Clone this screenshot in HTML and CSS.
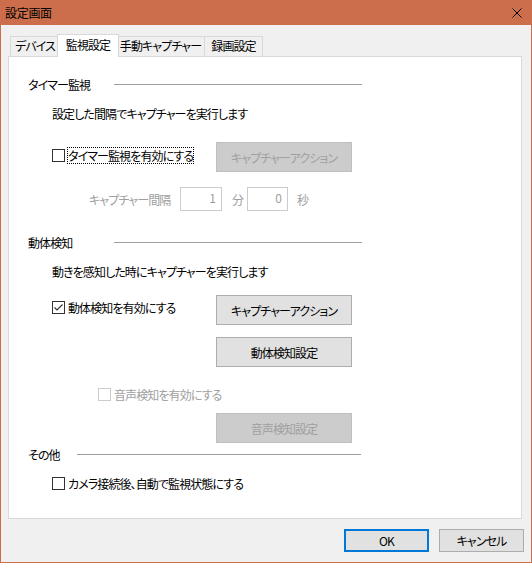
FILE: index.html
```html
<!DOCTYPE html>
<html lang="ja">
<head>
<meta charset="utf-8">
<title>設定画面</title>
<link rel="stylesheet" href="styles.css">
</head>
<body>
<div class="window">
  <div class="titlebar">
    <span class="title">設定画面</span>
    <svg class="close" width="10" height="10" viewBox="0 0 10 10"><path d="M0.5 0.5 L9.5 9.5 M9.5 0.5 L0.5 9.5" stroke="#000" stroke-width="1" fill="none"/></svg>
  </div>
  <div class="client">
    <div class="tabs">
      <div class="tab t1">デバイス</div>
      <div class="tab sel">監視設定</div>
      <div class="tab t3">手動キャプチャー</div>
      <div class="tab t4">録画設定</div>
    </div>
    <div class="panel">
      <div class="ghead g1"><span>タイマー監視</span><span class="rule"></span></div>
      <div class="desc r-desc1">設定した間隔でキャプチャーを実行します</div>
      <div class="row r-timer">
        <label class="chk"><span class="box"></span><span class="lbl focus">タイマー監視を有効にする</span></label>
        <button class="btn disabled">キャプチャーアクション</button>
      </div>
      <div class="row r-interval">
        <span class="ilabel">キャプチャー間隔</span>
        <span class="field f1">1</span>
        <span class="unit u1">分</span>
        <span class="field f2">0</span>
        <span class="unit u2">秒</span>
      </div>
      <div class="ghead g2"><span>動体検知</span><span class="rule"></span></div>
      <div class="desc r-desc2">動きを感知した時にキャプチャーを実行します</div>
      <div class="row r-motion">
        <label class="chk"><span class="box"><svg width="11" height="11" viewBox="0 0 11 11"><path d="M1.5 5.5 L4 8 L9.5 2.5" stroke="#333" stroke-width="1.2" fill="none"/></svg></span><span class="lbl">動体検知を有効にする</span></label>
        <button class="btn">キャプチャーアクション</button>
      </div>
      <div class="row r-motionset">
        <button class="btn">動体検知設定</button>
      </div>
      <div class="row r-audio">
        <label class="chk dis"><span class="box"></span><span class="lbl">音声検知を有効にする</span></label>
      </div>
      <div class="row r-audioset">
        <button class="btn disabled">音声検知設定</button>
      </div>
      <div class="ghead g3"><span>その他</span><span class="rule"></span></div>
      <div class="row r-auto">
        <label class="chk"><span class="box"></span><span class="lbl">カメラ接続後、自動で監視状態にする</span></label>
      </div>
    </div>
    <div class="footer">
      <button class="btn fbtn ok">OK</button>
      <button class="btn fbtn">キャンセル</button>
    </div>
  </div>
</div>
</body>
</html>
```
FILE: styles.css
```css
* { box-sizing: border-box; }
html, body { margin: 0; padding: 0; background: #fff; }
body {
  font-family: "Noto Sans CJK JP", "Noto Sans", sans-serif;
  font-size: 12px;
  font-feature-settings: "palt";
  letter-spacing: -0.9px;
  color: #000;
}
.window {
  width: 532px;
  height: 563px;
  border: 1px solid #cc6d4c;
  background: #f0f0f0;
  display: flex;
  flex-direction: column;
}
.titlebar {
  height: 24px;
  background: #cc6d4c;
  display: flex;
  align-items: center;
  justify-content: space-between;
  padding: 0 9px 0 4px;
  flex: none;
}
.title { font-size: 12px; line-height: 16px; letter-spacing: -0.3px; }
.close { display: block; margin-top: -1px; }
.client { flex: 1; display: flex; flex-direction: column; }
.tabs {
  display: flex;
  align-items: flex-start;
  margin: 11px 0 0 9px;
  height: 20px;
}
.tab {
  height: 20px;
  border: 1px solid #d9d9d9;
  border-bottom: none;
  background: #f0f0f0;
  text-align: center;
  line-height: 18px;
  white-space: nowrap;
}
.t1 { width: 49px; border-right: none; }
.sel {
  position: relative;
  z-index: 1;
  width: 62px;
  height: 23px;
  margin: -2px -2px 0 -2px;
  background: #fff;
  line-height: 19px;
}
.t3 { width: 88px; border-left: none; }
.t4 { width: 58px; border-left: none; }
.panel {
  margin-left: 7px;
  width: 514px;
  height: 463px;
  border: 1px solid #d9d9d9;
  background: #fff;
  flex: none;
}
.ghead {
  display: grid;
  align-items: center;
  height: 20px;
  padding-left: 19px;
}
.g1, .g2 { grid-template-columns: 86px 248px; }
.g3 { grid-template-columns: 49px 284px; }
.g1 { margin-top: 17px; }
.g2 { margin-top: 21px; }
.g3 { margin-top: 1px; }
.rule { height: 1px; background: #a0a0a0; }
.desc { height: 20px; line-height: 20px; padding-left: 43px; }
.r-desc1 { margin-top: 10px; }
.r-desc2 { margin-top: 10px; }
.row { display: flex; align-items: flex-start; padding-left: 43px; }
.chk {
  display: flex;
  align-items: center;
  height: 17px;
}
.box {
  width: 13px;
  height: 13px;
  border: 1px solid #333;
  background: #fff;
  display: flex;
  align-items: center;
  justify-content: center;
  flex: none;
}
.box svg { display: block; }
.lbl { margin-left: 2px; line-height: 17px; padding: 0 1px; }
.focus { outline: 1px dotted #000; outline-offset: -1px; }
.chk.dis .box { border-color: #cccccc; }
.chk.dis .lbl { color: #a0a0a0; }
.btn {
  font: inherit;
  font-feature-settings: "palt";
  letter-spacing: -0.9px;
  width: 136px;
  height: 30px;
  background: #e1e1e1;
  border: 1px solid #adadad;
  color: #000;
  padding: 0;
  margin: 0;
}
.btn.disabled {
  background: #cccccc;
  border-color: #bfbfbf;
  color: #a0a0a0;
}
.r-timer { margin-top: 18px; height: 30px; }
.r-timer .chk { width: 164px; margin-top: 5px; }
.r-interval { margin-top: 15px; height: 24px; align-items: center; padding-left: 80px; color: #a0a0a0; }
.ilabel { width: 91px; }
.field {
  height: 24px;
  border: 1px solid #cccccc;
  background: #fff;
  text-align: right;
  line-height: 20px;
  padding-right: 6px;
  color: #a0a0a0;
}
.f1 { width: 42px; }
.f2 { width: 41px; }
.u1 { margin: 0 4px 0 10px; }
.u2 { margin-left: 9px; }
.r-motion { margin-top: 13px; height: 30px; }
.r-motion .chk { width: 164px; margin-top: 4px; }
.r-motionset { margin-top: 12px; padding-left: 207px; }
.r-audio { margin-top: 17px; padding-left: 89px; height: 20px; }
.r-audio .chk { margin-top: 2px; }
.r-audioset { margin-top: 9px; padding-left: 207px; }
.r-auto { margin-top: 9px; height: 20px; }
.r-auto .chk { margin-top: 2px; }
.footer {
  display: flex;
  justify-content: flex-end;
  gap: 10px;
  margin: 10px 7px 0 0;
}
.fbtn { width: 85px; height: 23px; }
.ok { border: 2px solid #0078d7; }
```
